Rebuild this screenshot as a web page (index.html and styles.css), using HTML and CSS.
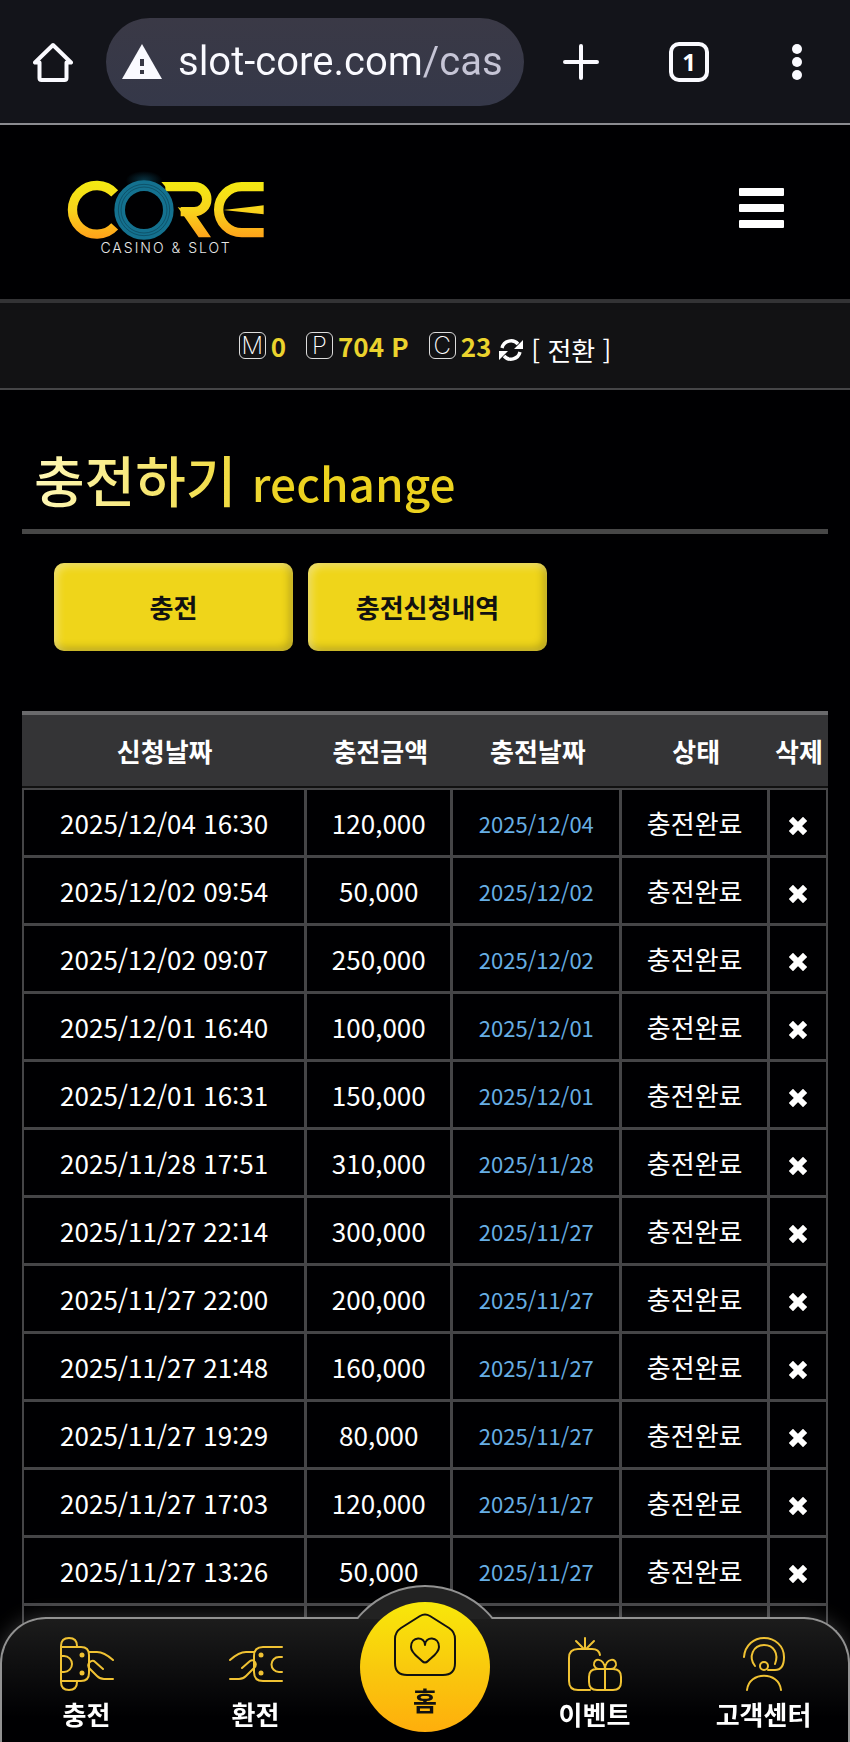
FILE: index.html
```html
<!DOCTYPE html>
<html lang="ko">
  <head>
    <meta charset="UTF-8" />
    <meta name="viewport" content="width=device-width, initial-scale=1.0" />
    <title>CORE</title>
    <link rel="stylesheet" href="styles.css">
  </head>
  <body>
    <svg class="defs" aria-hidden="true">
      <symbol id="icon-x" viewBox="0 0 18 18">
        <path d="M4 4l10 10M14 4L4 14" fill="none" stroke="#fff" stroke-width="6" stroke-linecap="square" stroke-linejoin="round" />
      </symbol>
    </svg>

    <div class="browser">
      <button class="home-btn" aria-label="Home">
        <svg width="40" height="40" viewBox="0 0 40 40" fill="none" stroke="#fafaff" stroke-width="4" stroke-linecap="round" stroke-linejoin="round">
          <path d="M2 20.500L20 3l18 17.500M2 20.500h4.500V36q0 2 2 2h23q2 0 2-2V20.500H38" />
        </svg>
      </button>
      <div class="address">
        <svg width="40" height="35" viewBox="0 0 40 35">
          <path d="M20 0l20 35H0z" fill="#fafaff" />
          <path d="M18 15h4v7h-4zM18 26h4v4h-4z" fill="#383845" />
        </svg>
        <input type="text" class="url" value="slot-core.com/cas" aria-label="URL">
      </div>
      <div class="tools">
        <button class="icon-btn" aria-label="New tab">
          <svg width="36" height="36" viewBox="0 0 36 36" stroke="#fafaff" stroke-width="4" stroke-linecap="round">
            <path d="M18 2v32M2 18h32" />
          </svg>
        </button>
        <button class="icon-btn" aria-label="Tabs"><span class="tabs">1</span></button>
        <button class="icon-btn" aria-label="Menu">
          <svg width="10" height="36" viewBox="0 0 10 36" fill="#fafaff">
            <circle cx="5" cy="5" r="5" /><circle cx="5" cy="18" r="5" /><circle cx="5" cy="31" r="5" />
          </svg>
        </button>
      </div>
    </div>

    <header class="header">
      <a href="#" class="logo">
        <svg width="200" height="70" viewBox="80 60 600 210">
          <defs>
            <linearGradient id="gold" gradientUnits="userSpaceOnUse" x1="0" y1="90" x2="0" y2="264">
              <stop offset="0" stop-color="#f3ea12" />
              <stop offset="0.5" stop-color="#f8d41c" />
              <stop offset="1" stop-color="#ffa01a" />
            </linearGradient>
            <radialGradient id="glow">
              <stop offset="0" stop-color="#0d4a60" stop-opacity="0.700" />
              <stop offset="1" stop-color="#0d4a60" stop-opacity="0" />
            </radialGradient>
          </defs>
          <ellipse cx="314" cy="88" rx="55" ry="28" fill="url(#glow)" />
          <g fill="none" stroke="url(#gold)" stroke-width="28">
            <path d="M226 127A73 73 0 1 0 226 226" />
            <path d="M378 107H465A37 37 0 0 1 465 182H424" />
            <path d="M673 107H607A69 69 0 0 0 607 245H673" />
          </g>
          <path d="M366 93h24v28zM415 168l50 18 50 73h-37zM552 177l121-14v27z" fill="url(#gold)" />
          <circle cx="314" cy="177" r="73" fill="none" stroke="#14718f" stroke-width="32" />
          <g fill="none" stroke="#0a4257" stroke-width="2">
            <circle cx="314" cy="177" r="77" />
            <circle cx="314" cy="177" r="69" />
          </g>
        </svg>
        <span class="logo-sub">CASINO &amp; SLOT</span>
      </a>
      <button class="menu-btn" aria-label="메뉴">
        <span></span><span></span><span></span>
      </button>
    </header>

    <div class="wallet">
      <span class="money"><i>M</i><b>0</b></span>
      <span class="money"><i>P</i><b>704 P</b></span>
      <span class="money"><i>C</i><b>23</b></span>
      <button class="convert">
        <svg width="24" height="24" viewBox="0 0 24 24">
          <path d="M3 10A9.300 9.300 0 0 1 19 6M21 14A9.300 9.300 0 0 1 5 18" fill="none" stroke="#fff" stroke-width="3.400" />
          <path d="M24 2v9h-9zM0 22v-9h9z" fill="#fff" />
        </svg>
        [ 전환 ]
      </button>
    </div>

    <main>
      <h1 class="title"><span class="title-text">충전하기 <small>rechange</small></span></h1>
      <div class="actions">
        <button class="btn">충전</button>
        <button class="btn">충전신청내역</button>
      </div>
      <table class="history">
        <colgroup>
          <col class="c-request"><col class="c-amount"><col class="c-date"><col class="c-state"><col class="c-del">
        </colgroup>
        <thead>
          <tr>
            <th>신청날짜</th>
            <th>충전금액</th>
            <th>충전날짜</th>
            <th>상태</th>
            <th>삭제</th>
          </tr>
        </thead>
        <tbody id="rows"></tbody>
      </table>
    </main>

    <nav class="bottom-nav">
      <div class="bump"></div>
      <a href="#">
        <svg width="54" height="54" viewBox="0 0 54 54">
          <path d="M1 10V44M1 10h20q8 0 8 8v18q0 8-8 8H1M1 10V9q0-8 8-8t8 8v1M1 44v1q0 8 8 8t8-8v-1M1 19h3a8 8 0 0 1 0 16H1" />
          <path d="M29 15h8q7 0 16 8M43 32l-9-8q-3-1-5 2-2 3 1 6l7 7q3 3 7 3h9" />
          <circle class="dot" cx="22" cy="18" r="2.500" /><circle class="dot" cx="22" cy="36" r="2.500" />
        </svg>
        충전
      </a>
      <a href="#">
        <svg width="54" height="54" viewBox="0 0 54 54">
          <path d="M53 10H34q-9 0-9 9v16q0 9 9 9h19M53 20h-3a7.500 7.500 0 0 0 0 15h3" />
          <path d="M25 15h-8q-7 0-16 8M13 31l8-7q3-2 5 1 2 3-1 6l-8 8q-3 3-7 3H1" />
          <circle class="dot" cx="32" cy="18" r="2.500" /><circle class="dot" cx="32" cy="36" r="2.500" />
        </svg>
        환전
      </a>
      <a href="#" class="home">
        <svg width="64" height="64" viewBox="0 0 64 64">
          <path d="M27 3q5-3 10 0l19 12q6 4 6 11v24q0 12-12 12H14Q2 62 2 50V26q0-7 6-11z" />
          <path d="M32 32c0-9-14-9-14 2 0 6 7 10 11 14q3 3 6 0c4-4 11-8 11-14 0-11-14-11-14-2z" />
        </svg>
        홈
      </a>
      <a href="#">
        <svg width="54" height="54" viewBox="0 0 54 54">
          <path d="M22 53H10q-9 0-9-9V21q0-9 9-9h14q7 0 8 6M17 12V1M15 11L8 4M19 11l7-7" />
          <path d="M29 32h16q8 0 8 8v5q0 8-8 8H29q-8 0-8-8v-5q0-8 8-8zM37 32v21M37 32c-1-12-12-11-11-4 1 3 3 4 5 4M37 32c1-12 12-11 11-4-1 3-3 4-5 4" />
        </svg>
        이벤트
      </a>
      <a href="#">
        <svg width="54" height="54" viewBox="0 0 54 54">
          <path d="M7 20C8 8 17 1 27 1c11 0 20 8 20 19 0 8-3 13-9 13H31" />
          <path d="M18 29C11 20 16 8 27 8c10 0 15 9 11 19" />
          <circle cx="27" cy="29" r="4" />
          <path d="M10 53C12 34 42 34 44 53" />
        </svg>
        고객센터
      </a>
    </nav>

    <script>
      const records = [
        ["2025/12/04 16:30", "120,000", "2025/12/04"],
        ["2025/12/02 09:54", "50,000", "2025/12/02"],
        ["2025/12/02 09:07", "250,000", "2025/12/02"],
        ["2025/12/01 16:40", "100,000", "2025/12/01"],
        ["2025/12/01 16:31", "150,000", "2025/12/01"],
        ["2025/11/28 17:51", "310,000", "2025/11/28"],
        ["2025/11/27 22:14", "300,000", "2025/11/27"],
        ["2025/11/27 22:00", "200,000", "2025/11/27"],
        ["2025/11/27 21:48", "160,000", "2025/11/27"],
        ["2025/11/27 19:29", "80,000", "2025/11/27"],
        ["2025/11/27 17:03", "120,000", "2025/11/27"],
        ["2025/11/27 13:26", "50,000", "2025/11/27"],
      ];

      let rows = document.querySelector("#rows");

      for (let [requested, amount, date] of records) {
        rows.innerHTML += `
          <tr>
            <td>${requested}</td>
            <td>${amount}</td>
            <td class="date">${date}</td>
            <td>충전완료</td>
            <td><button class="del" aria-label="삭제"><svg width="18" height="18"><use href="#icon-x" /></svg></button></td>
          </tr>`;
      }
      // blank row runs on under the bottom nav
      rows.innerHTML += "<tr><td></td><td></td><td></td><td></td><td></td></tr>";
    </script>
  </body>
</html>
```

FILE: styles.css
```css
* {
  margin: 0;
  padding: 0;
  box-sizing: border-box;
}
body {
  height: 100vh;
  overflow: hidden;
  background-color: #000002;
  color: #fff;
  font-family: "Noto Sans CJK KR", sans-serif;
  font-size: 26px;
  line-height: 40px;
}
button {
  border: none;
  background: none;
  color: inherit;
  font: inherit;
  cursor: pointer;
}
a {
  color: inherit;
  text-decoration: none;
}
svg {
  display: block;
}
.defs {
  position: absolute;
  width: 0;
  height: 0;
}

/* browser bar */
.browser {
  height: 125px;
  padding: 0 29px 0 33px;
  display: flex;
  align-items: center;
  gap: 33px;
  background-color: #13141a;
  border-bottom: 2px solid #8b8b90;
}
.address {
  flex: 1;
  min-width: 0;
  height: 88px;
  padding: 0 16px;
  display: flex;
  align-items: center;
  gap: 16px;
  border-radius: 44px;
  background: linear-gradient(#3a3946, #353849);
}
.address svg {
  flex: none;
}
.url {
  flex: 1;
  min-width: 0;
  height: 60px;
  border: none;
  outline: none;
  font-family: Roboto, sans-serif;
  font-size: 40px;
  color: transparent;
  background: linear-gradient(90deg, #fafaff 243px, #c6c5d6 243px);
  -webkit-background-clip: text;
  background-clip: text;
}
.tools {
  flex: none;
  display: flex;
  align-items: center;
  gap: 60px;
}
.icon-btn {
  width: 48px;
  height: 48px;
  display: flex;
  align-items: center;
  justify-content: center;
}
.tabs {
  width: 40px;
  height: 40px;
  border: 4px solid #fafaff;
  border-radius: 10px;
  font-family: "Open Sans", sans-serif;
  font-size: 24px;
  font-weight: 700;
  line-height: 32px;
  text-align: center;
}

/* site header */
.header {
  height: 174px;
  padding: 0 66px 8px;
  display: flex;
  align-items: center;
  justify-content: space-between;
}
.logo {
  padding-top: 10px;
  display: flex;
  flex-direction: column;
  align-items: center;
}
.logo-sub {
  font-family: Inter, sans-serif;
  font-size: 14px;
  font-weight: 300;
  line-height: 14px;
  letter-spacing: 2px;
  color: #e8e8e8;
}
.menu-btn {
  display: flex;
  flex-direction: column;
  gap: 8px;
}
.menu-btn span {
  width: 45px;
  height: 8px;
  border-radius: 1px;
  background-color: #fff;
}

/* balances */
.wallet {
  height: 91px;
  display: flex;
  align-items: center;
  justify-content: center;
  gap: 20px;
  background-color: #121214;
  border-top: 4px solid #333335;
  border-bottom: 2px solid #454547;
}
.money {
  display: flex;
  align-items: center;
  gap: 5px;
}
.money i {
  width: 27px;
  height: 27px;
  border: 1px solid #ddd;
  border-radius: 6px;
  font-family: Inter, sans-serif;
  font-size: 24px;
  font-style: normal;
  font-weight: 200;
  line-height: 25px;
  text-align: center;
}
.money b {
  color: #ebd32d;
}
.convert {
  display: flex;
  align-items: center;
  gap: 8px;
  margin-left: -12px;
  padding-top: 8px;
}

/* content */
main {
  padding: 39px 22px 0;
}
.title {
  height: 105px;
  padding-left: 12px;
  border-bottom: 5px solid #474747;
  font-size: 55px;
  font-weight: 500;
  line-height: 98px;
}
.title-text {
  display: inline-block;
  background: linear-gradient(90deg, #fff8b8, #ecd21f 60%);
  -webkit-background-clip: text;
  background-clip: text;
  color: transparent;
}
.title small {
  font-size: 46px;
}
.actions {
  padding: 29px 32px 60px;
  display: flex;
  gap: 15px;
}
.btn {
  width: 239px;
  height: 88px;
  border-radius: 10px;
  background-color: #efd51a;
  box-shadow: inset 3px 3px 8px rgba(255, 255, 255, 0.4), inset -3px -3px 8px rgba(0, 0, 0, 0.25);
  color: #111;
  font-weight: 700;
}
.history {
  width: 100%;
  table-layout: fixed;
  border-collapse: separate;
  border-spacing: 0;
  text-align: center;
}
.c-request {
  width: 35.4%;
}
.c-amount {
  width: 18.1%;
}
.c-date {
  width: 21%;
}
.c-state {
  width: 18.3%;
}
.c-del {
  width: 7.2%;
}
.history th {
  height: 77px;
  border-top: 4px solid #6a6a6c;
  border-bottom: 2px solid #111;
  background-color: #343436;
  white-space: nowrap;
}
.history td {
  height: 68px;
  border-right: 3px solid #454547;
  border-bottom: 3px solid #454547;
}
.history td:first-child {
  border-left: 2px solid #454547;
}
.history td:last-child {
  border-right-width: 2px;
}
.history tbody tr:first-child td {
  height: 70px;
  border-top: 2px solid #454547;
}
.history .date {
  color: #67aee4;
  font-size: 22px;
}
.del {
  display: block;
  margin: 6px auto 0;
}

/* bottom nav */
.bottom-nav {
  position: fixed;
  left: 0;
  right: 0;
  bottom: 0;
  height: 125px;
  display: flex;
  border: 2px solid #929292;
  border-bottom: none;
  border-radius: 46px 46px 0 0;
  background: linear-gradient(#1c1c1c, #000002 80%);
  box-shadow: 0 0 20px rgba(255, 255, 255, 0.2);
}
.bottom-nav a {
  flex: 1;
  padding-top: 18px;
  display: flex;
  flex-direction: column;
  align-items: center;
  gap: 3px;
  font-weight: 700;
}
.bottom-nav svg {
  fill: none;
  stroke: #f0c233;
  stroke-width: 2;
  stroke-linecap: round;
  stroke-linejoin: round;
}
.bottom-nav .dot {
  fill: #f0c233;
  stroke: none;
}
/* raised arc behind the home button */
.bump {
  position: absolute;
  left: 50%;
  top: -34px;
  width: 178px;
  height: 34px;
  margin-left: -89px;
  overflow: hidden;
}
.bump::before {
  content: "";
  display: block;
  height: 178px;
  border: 2px solid #929292;
  border-radius: 50%;
  background-color: #222;
}
.bottom-nav .home {
  position: relative;
  flex: none;
  width: 130px;
  height: 130px;
  margin: -17px 20px 0;
  padding-top: 11px;
  border-radius: 50%;
  background: linear-gradient(#f8e80a, #f9c70d 55%, #ffae0c);
  color: #111;
}
.home svg {
  stroke: #111;
}
```
